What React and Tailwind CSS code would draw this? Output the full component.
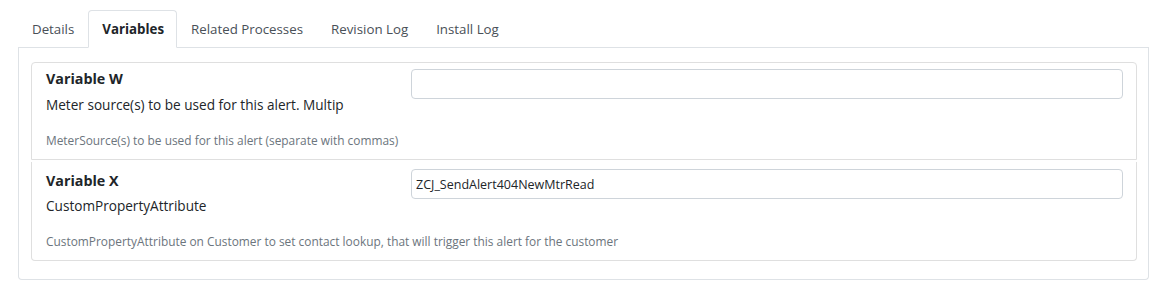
const tabs = ['Details', 'Variables', 'Related Processes', 'Revision Log', 'Install Log'];

const variables = [
  {
    name: 'Variable W',
    label: 'Meter source(s) to be used for this alert. Multip',
    value: '',
    help: 'MeterSource(s) to be used for this alert (separate with commas)',
  },
  {
    name: 'Variable X',
    label: 'CustomPropertyAttribute',
    value: 'ZCJ_SendAlert404NewMtrRead',
    help: 'CustomPropertyAttribute on Customer to set contact lookup, that will trigger this alert for the customer',
  },
];

function VariableRow({ item, first }) {
  return (
    <div
      className={
        first
          ? 'flex rounded-t border border-[#dfdfdf] pl-[14px] pr-[13px] pt-[5px] pb-[10px]'
          : 'mt-[2px] flex rounded-b border-x border-b border-[#dfdfdf] pl-[14px] pr-[13px] pt-[8px] pb-[10px]'
      }
    >
      <div className="w-[365px] shrink-0">
        <div className="text-[14.3px] font-bold leading-[22px] text-[#212529]">{item.name}</div>
        <div className={first ? 'mt-[5px] whitespace-nowrap text-[13.6px] leading-[20px] text-[#212529]' : 'mt-[4px] whitespace-nowrap text-[13.6px] leading-[20px] text-[#212529]'}>
          {item.label}
        </div>
        <div className="mt-[16px] whitespace-nowrap text-[11.9px] leading-[18px] text-[#6c757d]">{item.help}</div>
      </div>
      <div className={first ? 'flex-1 pt-[1px]' : 'flex-1 -mt-[1px]'}>
        <input
          readOnly
          value={item.value}
          className="h-[30px] w-full rounded border border-[#ced4da] bg-white px-[4px] text-[12.5px] text-[#212529] outline-none"
        />
      </div>
    </div>
  );
}

export default function App() {
  return (
    <div className="h-[291px] bg-white pl-[18px] pr-[12px] pt-[10px] font-['Open_Sans','Noto_Sans',sans-serif] text-[#212529]">
      <div className="flex border-b border-[#dee2e6]">
        {tabs.map((t) => (
          <div
            key={t}
            className={
              t === 'Variables'
                ? '-mb-px rounded-t border border-[#dee2e6] border-b-white bg-white pl-[13px] pr-[12px] pt-[9px] pb-[7px] text-[13.3px] font-bold leading-[19px]'
                : 'border border-transparent px-[13px] pt-[9px] pb-[7px] text-[13.3px] leading-[19px] text-[#495057]'
            }
          >
            {t}
          </div>
        ))}
      </div>
      <div className="h-[232px] rounded-b border-x border-b border-[#dee2e6] pl-[12px] pr-[11px] pt-[14px]">
        {variables.map((v, i) => (
          <VariableRow key={v.name} item={v} first={i === 0} />
        ))}
      </div>
    </div>
  );
}
